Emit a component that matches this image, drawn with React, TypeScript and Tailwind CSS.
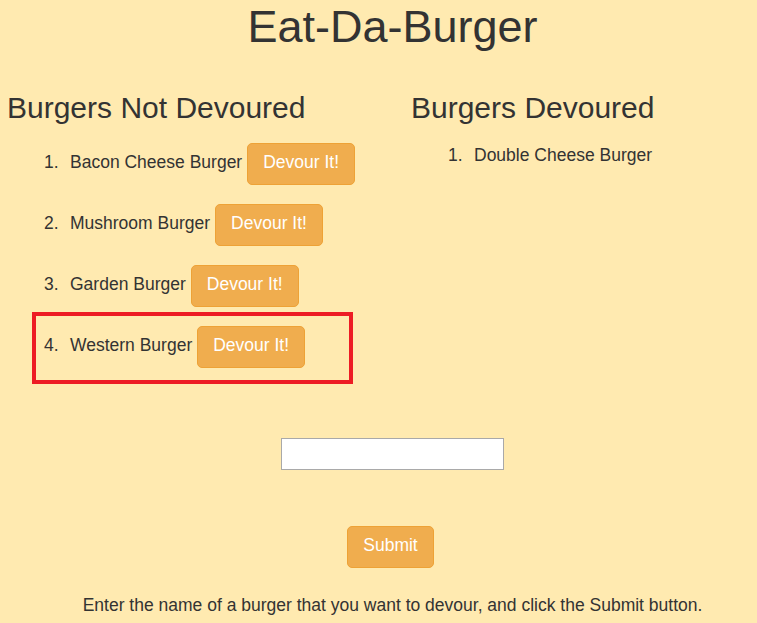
import React from 'react';

const notDevoured = ['Bacon Cheese Burger', 'Mushroom Burger', 'Garden Burger', 'Western Burger'];
const devoured = ['Double Cheese Burger'];

const DevourButton = ({ label }: { label: string }) => (
  <button className="h-[42px] px-[15px] pb-[4px] flex items-center rounded-[5px] border border-[#eea236] bg-[#f0ad4e] text-white text-[17.5px] leading-[25px]">
    {label}
  </button>
);

export default function App() {
  return (
    <div className="min-h-screen bg-[#ffeab0] text-[#333] font-['Liberation_Sans',Arial,sans-serif] text-[17.5px] leading-[25px]">
      <h1 className="pt-[2px] pl-[28px] text-center text-[45px] leading-[50px]">Eat-Da-Burger</h1>

      <div className="mt-[39px] flex">
        <div className="w-[411px] pl-[7px]">
          <h2 className="text-[30px] leading-[33px]">Burgers Not Devoured</h2>
          <ol className="mt-[19px] pl-[37px] flex flex-col gap-[19px]">
            {notDevoured.map((name, i) => (
              <li key={name} className="relative flex items-baseline">
                <span className="w-[26px] shrink-0">{i + 1}.</span>
                <span className="mr-[5px]">{name}</span>
                <DevourButton label="Devour It!" />
                {i === 3 && (
                  <div className="pointer-events-none absolute left-[-12px] top-[-14px] w-[321px] h-[72px] border-[4px] border-[#ed1c24]" />
                )}
              </li>
            ))}
          </ol>
        </div>
        <div className="flex-1">
          <h2 className="text-[30px] leading-[33px]">Burgers Devoured</h2>
          <ol className="mt-[19px] pl-[37px]">
            {devoured.map((name, i) => (
              <li key={name} className="flex">
                <span className="w-[26px] shrink-0">{i + 1}.</span>
                <span>{name}</span>
              </li>
            ))}
          </ol>
        </div>
      </div>

      <div className="mt-[70px] pl-[28px] flex justify-center">
        <input type="text" className="w-[223px] h-[32px] bg-white border border-[#a9a9a9] outline-none px-1" />
      </div>

      <div className="mt-[56px] pl-[24px] flex justify-center">
        <DevourButton label="Submit" />
      </div>

      <p className="mt-[25px] pl-[28px] text-center">
        Enter the name of a burger that you want to devour, and click the Submit button.
      </p>
    </div>
  );
}
